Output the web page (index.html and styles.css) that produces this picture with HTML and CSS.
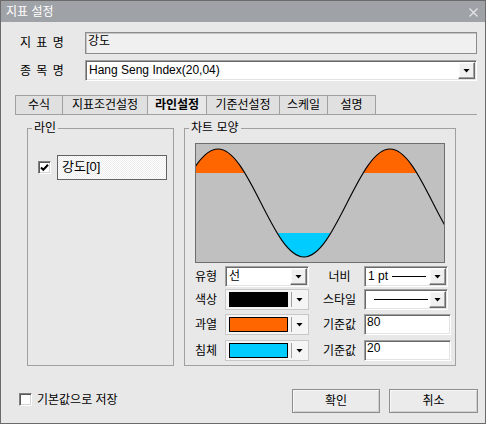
FILE: index.html
```html
<!DOCTYPE html>
<html lang="ko">
<head>
<meta charset="utf-8">
<title>지표 설정</title>
<link rel="stylesheet" href="styles.css">
</head>
<body>
<div class="window">
  <div class="titlebar">
    <span class="title">지표 설정</span>
    <svg class="close" width="9" height="9" viewBox="0 0 9 9"><path d="M0.5 0.5L8.5 8.5M8.5 0.5L0.5 8.5" stroke="#e4e6e8" stroke-width="1.2" fill="none"/></svg>
  </div>

  <div class="row r1">
    <span class="lbl">지 표 명</span>
    <div class="field-ro">강도</div>
  </div>
  <div class="row r2">
    <span class="lbl">종 목 명</span>
    <div class="combo wide"><span class="val">Hang Seng Index(20,04)</span><span class="btn"><i class="tri"></i></span></div>
  </div>

  <div class="tabs">
    <div class="tab t1">수식</div>
    <div class="tab t2">지표조건설정</div>
    <div class="tab t3 on">라인설정</div>
    <div class="tab t4">기준선설정</div>
    <div class="tab t5">스케일</div>
    <div class="tab t6 last">설명</div>
  </div>

  <div class="panel">
    <fieldset class="group g-line">
      <legend>라인</legend>
      <div class="line-item">
        <span class="chk"><svg width="11" height="11" viewBox="0 0 11 11"><path d="M2 5.5L4.3 7.8L9 2.8" stroke="#000" stroke-width="2" fill="none"/></svg></span>
        <div class="line-name">강도[0]</div>
      </div>
    </fieldset>

    <fieldset class="group g-chart">
      <legend>차트 모양</legend>
      <div class="chart">
        <svg class="wave" width="248" height="118" viewBox="1 1 248 118">
          <defs>
            <clipPath id="clipTop"><rect x="-30" y="-10" width="320" height="40"/></clipPath>
            <clipPath id="clipBot"><rect x="-30" y="90" width="320" height="40"/></clipPath>
          </defs>
          <path clip-path="url(#clipTop)" fill="#ff6600" d="M-20,60 C-5.98,32.34 7.43,6 23,6 C38.57,6 51.98,32.34 66,60 C80.02,87.66 93.43,114 109,114 C124.57,114 137.98,87.66 152,60 C166.02,32.34 179.43,6 195,6 C210.57,6 223.98,32.34 238,60 C252.02,87.66 265.43,114 281,114 L281,130 L-20,130 Z"/>
          <path clip-path="url(#clipBot)" fill="#00ccff" d="M-20,60 C-5.98,32.34 7.43,6 23,6 C38.57,6 51.98,32.34 66,60 C80.02,87.66 93.43,114 109,114 C124.57,114 137.98,87.66 152,60 C166.02,32.34 179.43,6 195,6 C210.57,6 223.98,32.34 238,60 C252.02,87.66 265.43,114 281,114 L281,-10 L-20,-10 Z"/>
          <path fill="none" stroke="#000" stroke-width="1.1" d="M-20,60 C-5.98,32.34 7.43,6 23,6 C38.57,6 51.98,32.34 66,60 C80.02,87.66 93.43,114 109,114 C124.57,114 137.98,87.66 152,60 C166.02,32.34 179.43,6 195,6 C210.57,6 223.98,32.34 238,60 C252.02,87.66 265.43,114 281,114"/>
        </svg>
      </div>

      <div class="props">
        <div class="prow">
          <span class="plbl">유형</span>
          <div class="combo cmb"><span class="val">선</span><span class="btn"><i class="tri"></i></span></div>
          <span class="plbl2">너비</span>
          <div class="ctrl2"><div class="combo cmb"><span class="val">1 pt <i class="pt-line"></i></span><span class="btn"><i class="tri"></i></span></div></div>
        </div>
        <div class="prow p2">
          <span class="plbl">색상</span>
          <div class="ccombo"><span class="swatch sw-black"></span><span class="sep"></span><i class="tri"></i></div>
          <span class="plbl2">스타일</span>
          <div class="ctrl2"><div class="combo cmb"><span class="val"><i class="style-line"></i></span><span class="btn"><i class="tri"></i></span></div></div>
        </div>
        <div class="prow p3">
          <span class="plbl">과열</span>
          <div class="ccombo"><span class="swatch sw-orange"></span><span class="sep"></span><i class="tri"></i></div>
          <span class="plbl2">기준값</span>
          <div class="ctrl2"><div class="inp">80</div></div>
        </div>
        <div class="prow p4">
          <span class="plbl">침체</span>
          <div class="ccombo"><span class="swatch sw-cyan"></span><span class="sep"></span><i class="tri"></i></div>
          <span class="plbl2">기준값</span>
          <div class="ctrl2"><div class="inp">20</div></div>
        </div>
      </div>
    </fieldset>
  </div>

  <div class="footer">
    <div class="save"><span class="chk"></span><span>기본값으로 저장</span></div>
    <div class="buttons">
      <div class="button b-ok">확인</div>
      <div class="button b-cancel">취소</div>
    </div>
  </div>
</div>
</body>
</html>
```

FILE: styles.css
```css
* { box-sizing: border-box; }

body {
  margin: 0;
  font-family: "Liberation Sans", "Noto Sans CJK KR", sans-serif;
  font-size: 12px;
  color: #000;
  background: #e8e8e8;
}

.window {
  width: 486px;
  height: 424px;
  border: 1px solid #6b6b6b;
  background: #e8e8e8;
  overflow: hidden;
}

.titlebar {
  height: 21px;
  background: #9fa3a8;
  color: #fff;
  display: flex;
  align-items: center;
  justify-content: space-between;
  padding: 0 7px 0 5px;
}
.title { font-size: 12px; line-height: 14px; }
.close { display: block; margin-top: 1px; }

.row {
  display: flex;
  align-items: center;
  padding: 0 8px 0 19px;
}
.r1 { margin-top: 10px; height: 22px; }
.r2 { margin-top: 6px; height: 21px; }
.lbl { width: 65px; line-height: 14px; word-spacing: 2px; }

.field-ro {
  flex: 1;
  height: 22px;
  background: #f0f0f0;
  border: 1px solid #8c8c8c;
  box-shadow: inset 1px 1px #c4c4c4;
  padding: 1px 0 0 2px;
  line-height: 14px;
}

.combo {
  display: flex;
  align-items: stretch;
  height: 21px;
  background: #fff;
  border: 1px solid;
  border-color: #a0a0a0 #ffffff #ffffff #a0a0a0;
  box-shadow: inset 1px 1px #696969, inset -1px -1px #e3e3e3;
  padding: 1px 1px 1px 2px;
}
.combo .val {
  flex: 1;
  display: flex;
  align-items: center;
  padding-left: 1px;
  white-space: nowrap;
  overflow: hidden;
  line-height: 15px;
}
.wide { flex: 1; }

.btn {
  width: 17px;
  background: #f0f0f0;
  border: 1px solid;
  border-color: #ffffff #696969 #696969 #ffffff;
  box-shadow: inset -1px -1px #a0a0a0, inset 1px 1px #f8f8f8;
  display: flex;
  align-items: center;
  justify-content: center;
}
.tri {
  display: block;
  width: 7px;
  height: 4px;
  background: #000;
  clip-path: polygon(0 0, 100% 0, 50% 100%);
}

.tabs {
  display: flex;
  margin: 14px 8px 0 14px;
  height: 20px;
  border-bottom: 1px solid #a0a0a0;
}
.tab {
  height: 19px;
  border: 1px solid #a0a0a0;
  border-right: 0;
  border-bottom: 0;
  background: #e0e0e0;
  text-align: center;
  line-height: 18px;
  white-space: nowrap;
}
.tab.last { border-right: 1px solid #a0a0a0; }
.tab.on { background: #e8e8e8; font-weight: bold; }
.t1 { width: 47px; }
.t2 { width: 85px; }
.t3 { width: 59px; }
.t4 { width: 73px; }
.t5 { width: 48px; }
.t6 { width: 49px; }

.panel {
  display: flex;
  gap: 10px;
  margin-top: 6px;
  padding-left: 26px;
}
.group {
  margin: 0;
  padding: 0;
  min-width: 0;
  height: 245px;
  border: 1px solid #a0a0a0;
}
.group legend {
  padding: 0 2px;
  margin-left: 4px;
  font-size: 12px;
  line-height: 14px;
}
.g-line { width: 147px; }
.g-chart { width: 272px; }

.line-item {
  display: flex;
  align-items: center;
  gap: 6px;
  margin: 20px 0 0 10px;
}
.chk {
  display: block;
  width: 13px;
  height: 13px;
  background: #fff;
  border: 1px solid;
  border-color: #808080 #ffffff #ffffff #808080;
  box-shadow: inset 1px 1px #5a5a5a, inset -1px -1px #d4d4d4;
}
.chk svg { display: block; }
.line-name {
  width: 110px;
  height: 25px;
  border: 1px solid #646464;
  background: repeating-conic-gradient(#ffffff 0 25%, #ededed 0 50%) 0 0 / 2px 2px;
  padding-left: 4px;
  font-size: 13px;
  line-height: 22px;
}

.chart {
  margin: 8px 0 0 10px;
  width: 250px;
  height: 120px;
  border: 1px solid #6e6e6e;
  background: #c0c0c0;
}
.wave { display: block; }

.props { margin: 3px 0 0 10px; }
.prow {
  display: flex;
  align-items: center;
  height: 21px;
}
.p2 { margin-top: 2px; }
.p3 { margin-top: 4px; }
.p4 { margin-top: 5px; }
.plbl { width: 30px; line-height: 14px; }
.plbl2 {
  width: 55px;
  padding-left: 6px;
  text-align: center;
  line-height: 14px;
}
.cmb { width: 84px; }
.ctrl2 { width: 87px; }

.ccombo {
  width: 84px;
  height: 21px;
  display: flex;
  align-items: center;
  border: 1px solid #c8c8c8;
  background: #f5f5f5;
  padding-left: 3px;
}
.swatch {
  display: block;
  width: 59px;
  height: 15px;
  border: 1px solid #000;
}
.sw-black { background: #000; }
.sw-orange { background: #ff6600; }
.sw-cyan { background: #00ccff; }
.sep {
  display: block;
  width: 1px;
  height: 15px;
  background: #a0a0a0;
  margin: 0 4px 0 3px;
}

.pt-line {
  display: block;
  width: 34px;
  height: 1px;
  background: #000;
  margin-left: 4px;
}
.style-line {
  display: block;
  width: 54px;
  height: 1px;
  background: #000;
  margin-left: 6px;
}

.inp {
  width: 87px;
  height: 21px;
  background: #fff;
  border: 1px solid;
  border-color: #a0a0a0 #ffffff #ffffff #a0a0a0;
  box-shadow: inset 1px 1px #696969, inset -1px -1px #e3e3e3;
  padding: 0 0 0 2px;
  line-height: 14px;
}

.footer {
  display: flex;
  align-items: center;
  justify-content: space-between;
  margin-top: 23px;
  padding: 0 7px 0 18px;
}
.save {
  display: flex;
  align-items: center;
  gap: 5px;
  line-height: 14px;
  margin-top: -3px;
}
.buttons { display: flex; gap: 9px; }
.button {
  height: 24px;
  background: #ebebeb;
  border: 1px solid #8e8e8e;
  box-shadow: inset 1px 1px #f8f8f8, inset -1px -1px #d0d0d0;
  text-align: center;
  line-height: 22px;
}
.b-ok { width: 88px; }
.b-cancel { width: 89px; }
```
